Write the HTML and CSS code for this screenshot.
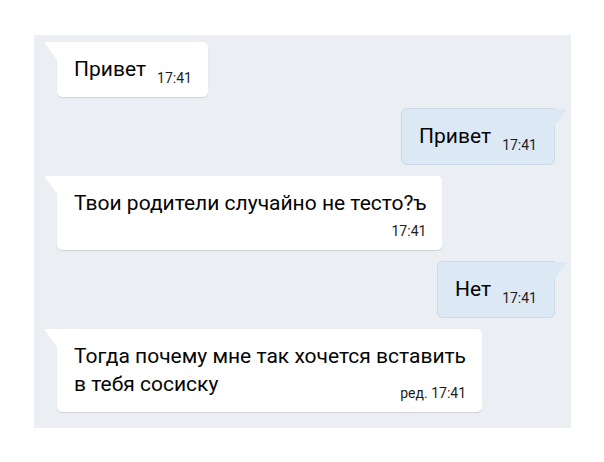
FILE: index.html
```html
<!DOCTYPE html>
<html lang="ru">
<head>
  <meta charset="UTF-8">
  <meta name="viewport" content="width=device-width, initial-scale=1.0">
  <title>Диалог</title>
  <link rel="stylesheet" href="styles.css">
</head>
<body>
  <div class="chat">
    <div class="msg in">
      <div class="row">
        <span class="text">Привет</span>
        <span class="time">17:41</span>
      </div>
    </div>

    <div class="msg out">
      <div class="row">
        <span class="text">Привет</span>
        <span class="time">17:41</span>
      </div>
    </div>

    <div class="msg in">
      <div class="text">Твои родители случайно не тесто?ъ</div>
      <div class="row end">
        <span class="time">17:41</span>
      </div>
    </div>

    <div class="msg out">
      <div class="row">
        <span class="text">Нет</span>
        <span class="time">17:41</span>
      </div>
    </div>

    <div class="msg in">
      <div class="text">Тогда почему мне так хочется вставить</div>
      <div class="row">
        <span class="text">в тебя сосиску</span>
        <span class="time edited">ред. 17:41</span>
      </div>
    </div>
  </div>
</body>
</html>
```

FILE: styles.css
```css
body {
  margin: 0;
  background: #fff;
  font-family: Roboto, "Noto Sans", Arial, sans-serif;
  color: #050505;
}
.chat {
  width: 537px;
  height: 393px;
  box-sizing: border-box;
  margin: 35px 0 0 34px;
  padding: 7px 17px 0 23px;
  background: #ebeef2;
  display: flex;
  flex-direction: column;
  align-items: flex-start;
  gap: 12px;
}
.msg {
  position: relative;
  padding: 13px 16px 14px 17px;
  background: #fff;
  border-radius: 5px;
  box-shadow: 0 1px 1px rgba(0, 0, 0, 0.12);
}
.msg::before {
  content: "";
  position: absolute;
  top: 0;
  width: 14px;
  height: 19px;
  background: inherit;
}
.in {
  border-top-left-radius: 0;
}
.in::before {
  left: -13px;
  clip-path: polygon(0 0, 100% 0, 100% 100%);
}
.out {
  align-self: flex-end;
  padding-right: 17px;
  background: #dde8f5;
  border-top-right-radius: 0;
  box-shadow: 0 0 0 1px #ccd9ea;
}
.out::before {
  right: -13px;
  clip-path: polygon(0 0, 100% 0, 0 100%);
}
.text {
  font-size: 21px;
  line-height: 28px;
  white-space: nowrap;
}
.row {
  display: flex;
  align-items: flex-end;
  gap: 11px;
}
.row.end {
  justify-content: flex-end;
  margin-top: 9px;
}
.time {
  font-size: 14px;
  line-height: 10px;
  color: #1e1e1e;
  white-space: nowrap;
}
.edited {
  margin-left: auto;
}
```
